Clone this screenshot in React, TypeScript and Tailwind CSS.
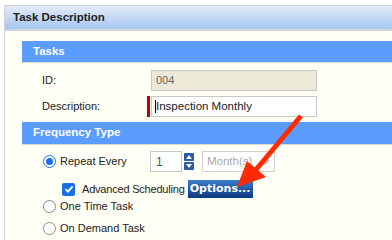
import React from "react";

const font = { fontFamily: '"Liberation Sans", Arial, sans-serif' };
const boldBtn = { fontFamily: '"DejaVu Sans", Verdana, sans-serif' };

const Radio = ({ checked }: { checked?: boolean }) => (
  <span
    className={
      "flex h-[13px] w-[13px] shrink-0 items-center justify-center rounded-full border bg-white " +
      (checked ? "border-[1.5px] border-[#1a6fe8]" : "border-[#8a8a8a]")
    }
  >
    {checked && <span className="h-[7px] w-[7px] rounded-full bg-[#1a6fe8]" />}
  </span>
);

const Checkbox = () => (
  <span className="flex h-[13px] w-[13px] shrink-0 items-center justify-center rounded-[2px] bg-[#1a6fe8]">
    <svg width="10" height="10" viewBox="0 0 10 10">
      <path d="M1.5 5.2 L4 7.6 L8.6 2.4" fill="none" stroke="white" strokeWidth="1.8" />
    </svg>
  </span>
);

const Band = ({ title, h }: { title: string; h: string }) => (
  <div className={"flex items-center border-b border-[#dcdcc8] bg-[#5b9cff] pl-[11px] text-[11.5px] font-bold text-white " + h}>
    {title}
  </div>
);

export default function App() {
  return (
    <div className="relative h-[240px] w-[392px] overflow-hidden bg-white text-[11px] text-[#222]" style={font}>
      <div className="ml-[4px] mt-[5px] h-[240px] border-l border-t border-[#d4d4d4] bg-[#fffff5]">
        <div className="flex h-[25px] items-center border-b-2 border-[#cfd3da] bg-gradient-to-b from-[#e4ebf8] to-[#a6c6f0] pl-[8px] text-[11.5px] font-bold text-[#222]">
          Task Description
        </div>
        <div className="pl-[17px] pt-[10px]">
          <Band title="Tasks" h="h-[22px]" />
          <div className="mt-[7px] flex h-[21px] items-center">
            <span className="w-[129px] pl-[20px]">ID:</span>
            <div className="flex h-[21px] w-[166px] items-center border border-[#c8c8c8] bg-[#ece9d8] pl-[4px] text-[#666]">
              004
            </div>
          </div>
          <div className="mt-[5px] flex h-[21px] items-center">
            <span className="w-[125px] pl-[20px]">Description:</span>
            <span className="mr-[1px] h-[21px] w-[3px] bg-[#c00000]" />
            <div className="flex h-[21px] w-[166px] items-center border border-[#c8c8c8] bg-white pl-[3px] text-[11.5px] text-[#222]">
              <span className="h-[13px] w-[1px] bg-black" />
              Inspection Monthly
            </div>
          </div>
          <div className="mt-[5px]">
            <Band title="Frequency Type" h="h-[23px]" />
          </div>
          <div className="mt-[6px] flex h-[21px] items-center">
            <div className="flex w-[128px] items-center gap-[4px] pl-[21px]">
              <Radio checked />
              Repeat Every
            </div>
            <div className="flex h-[21px] w-[32px] items-center border border-[#c8c8c8] bg-white pl-[5px] text-[12px] text-[#555]">
              1
            </div>
            <div className="ml-[2px] flex flex-col gap-[1px]">
              <span className="flex h-[8px] w-[10px] items-center justify-center rounded-[1px] bg-[#2a5ca8]">
                <svg width="6" height="4" viewBox="0 0 6 4"><path d="M0 4 L3 0 L6 4 Z" fill="white" /></svg>
              </span>
              <span className="flex h-[8px] w-[10px] items-center justify-center rounded-[1px] bg-[#2a5ca8]">
                <svg width="6" height="4" viewBox="0 0 6 4"><path d="M0 0 L3 4 L6 0 Z" fill="white" /></svg>
              </span>
            </div>
            <div className="ml-[8px] flex h-[21px] w-[73px] items-center justify-between border border-[#d0d0d0] bg-white pl-[4px] pr-[4px] text-[11.5px] text-[#aaa]">
              Month(s)
              <svg width="9" height="6" viewBox="0 0 9 6">
                <path d="M1 1 L4.5 4.5 L8 1" fill="none" stroke="#aaa" strokeWidth="1.5" />
              </svg>
            </div>
          </div>
          <div className="mt-[8px] flex h-[18px] items-center">
            <div className="ml-[40px]">
              <Checkbox />
            </div>
            <span className="ml-[7px] tracking-[-0.2px]">Advanced Scheduling</span>
            <button
              className="ml-[3px] flex h-[18px] w-[65px] items-center justify-center bg-gradient-to-b from-[#3d7ccc] to-[#0b3a7e] text-[11px] font-bold text-white"
              style={boldBtn}
            >
              Options...
            </button>
          </div>
          <div className="mt-[1px] flex h-[14px] items-center gap-[4px] pl-[21px]">
            <Radio />
            One Time Task
          </div>
          <div className="mt-[8px] flex h-[14px] items-center gap-[4px] pl-[21px]">
            <Radio />
            On Demand Task
          </div>
        </div>
      </div>
      <svg className="absolute left-0 top-0" width="392" height="240" viewBox="0 0 392 240">
        <line x1="301" y1="116" x2="254" y2="172" stroke="#ff2a00" strokeWidth="5" />
        <path d="M237 187 L247 161 L266 177 Z" fill="#ff2a00" />
      </svg>
    </div>
  );
}
